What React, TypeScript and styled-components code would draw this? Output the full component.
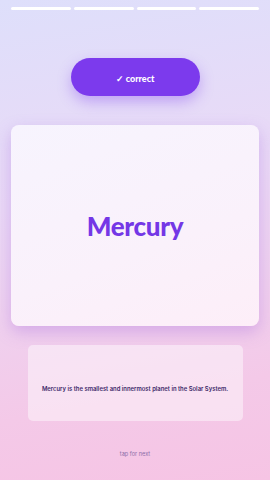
import styled, { createGlobalStyle } from 'styled-components'

const Global = createGlobalStyle`
  html, body {
    margin: 0;
    padding: 0;
  }
  body {
    font-family: Inter, 'Noto Sans', sans-serif;
  }
`

const Screen = styled.main`
  width: 270px;
  height: 480px;
  box-sizing: border-box;
  padding: 7px 11px 0 11px;
  display: flex;
  flex-direction: column;
  align-items: center;
  background: linear-gradient(170deg, #dedffb 0%, #ead9f6 40%, #f4c9e8 80%, #f6c4e4 100%);
  overflow: hidden;
`

const Progress = styled.div`
  width: 100%;
  display: grid;
  grid-template-columns: repeat(4, 1fr);
  gap: 3px;
`

const Segment = styled.div<{ $done?: boolean }>`
  height: 3px;
  border-radius: 2px;
  background: ${p => (p.$done ? '#ffffff' : 'rgba(255,255,255,0.85)')};
`

const Badge = styled.div`
  margin-top: 48px;
  width: 129px;
  height: 38px;
  box-sizing: border-box;
  padding-top: 2px;
  border-radius: 19px;
  background: #7c3aed;
  color: #fff;
  display: flex;
  align-items: center;
  justify-content: center;
  font-family: Lato, sans-serif;
  font-weight: 900;
  font-size: 9px;
  box-shadow: 0 6px 14px rgba(124, 58, 237, 0.35);
`

const Card = styled.section`
  margin-top: 29px;
  width: 248px;
  height: 201px;
  border-radius: 8px;
  background: linear-gradient(160deg, #f7f4fe 0%, #faf1fb 60%, #fdeef8 100%);
  box-shadow: 0 6px 16px rgba(160, 100, 220, 0.35);
  display: flex;
  align-items: center;
  justify-content: center;
`

const Word = styled.h1`
  margin: 0;
  font-family: Lato, sans-serif;
  font-weight: 900;
  font-size: 26px;
  color: #7437e6;
  letter-spacing: -0.3px;
`

const Info = styled.div`
  margin-top: 19px;
  width: 215px;
  height: 76px;
  box-sizing: border-box;
  padding-top: 10px;
  border-radius: 5px;
  background: rgba(255, 255, 255, 0.45);
  display: flex;
  align-items: center;
  justify-content: center;
`

const InfoText = styled.p`
  margin: 0;
  font-family: Inter, sans-serif;
  font-weight: 600;
  font-size: 5.9px;
  color: #3d2a6a;
  text-align: center;
`

const Hint = styled.div`
  margin-top: 30px;
  font-family: Inter, sans-serif;
  font-size: 5.6px;
  color: #8c6fa8;
`

export default function App() {
  return (
    <>
      <Global />
      <Screen>
        <Progress>
          {[0, 1, 2, 3].map(i => (
            <Segment key={i} $done />
          ))}
        </Progress>
        <Badge>✓ correct</Badge>
        <Card>
          <Word>Mercury</Word>
        </Card>
        <Info>
          <InfoText>Mercury is the smallest and innermost planet in the Solar System.</InfoText>
        </Info>
        <Hint>tap for next</Hint>
      </Screen>
    </>
  )
}
